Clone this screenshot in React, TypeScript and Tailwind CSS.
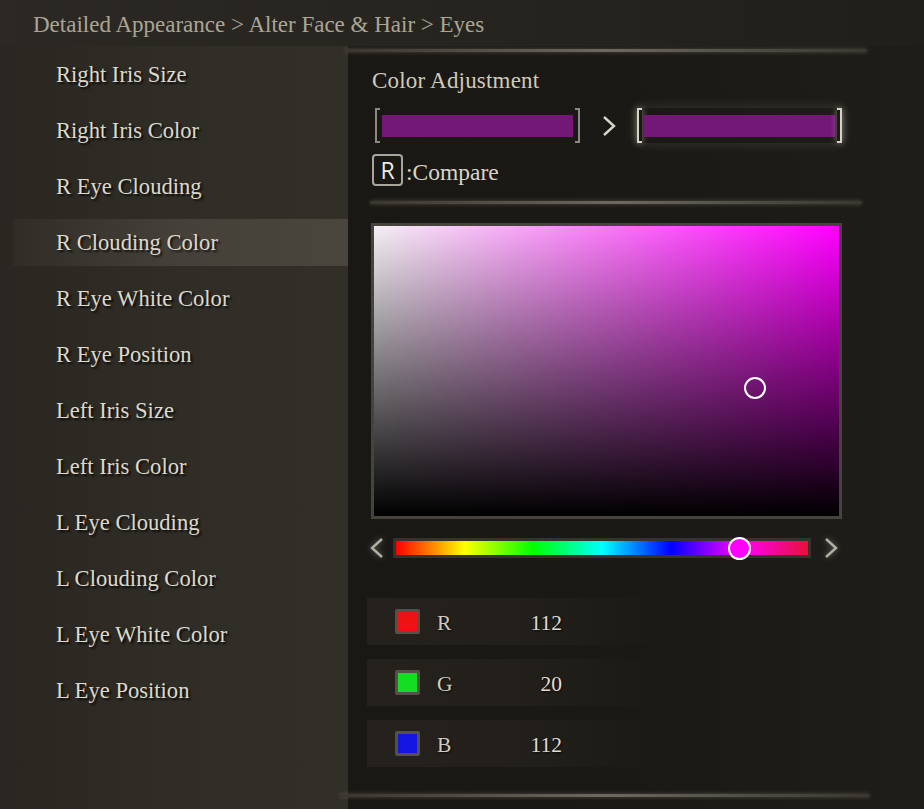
import React from 'react';

const items = [
  'Right Iris Size',
  'Right Iris Color',
  'R Eye Clouding',
  'R Clouding Color',
  'R Eye White Color',
  'R Eye Position',
  'Left Iris Size',
  'Left Iris Color',
  'L Eye Clouding',
  'L Clouding Color',
  'L Eye White Color',
  'L Eye Position',
];

const channels = [
  { label: 'R', value: 112, swatch: 'bg-[#ee1212]' },
  { label: 'G', value: 20, swatch: 'bg-[#14dd24]' },
  { label: 'B', value: 112, swatch: 'bg-[#1616e2]' },
];

const hue = 300;
const picker = { s: 0.82, v: 0.44 };

function Chevron({ dir, className }: { dir: 'left' | 'right'; className?: string }) {
  return (
    <svg width="16" height="22" viewBox="0 0 16 22" className={className}>
      <polyline
        points={dir === 'right' ? '3,2 13,11 3,20' : '13,2 3,11 13,20'}
        fill="none"
        stroke="currentColor"
        strokeWidth="2.4"
        strokeLinejoin="miter"
      />
    </svg>
  );
}

function Swatch({ active }: { active?: boolean }) {
  const bracket = active
    ? 'border-[#d6d2c6] shadow-[0_0_6px_rgba(220,215,200,0.55)]'
    : 'border-[#8d897f]';
  return (
    <div className={`flex items-center gap-[2px] ${active ? 'shadow-[0_0_14px_rgba(200,195,180,0.18)]' : ''}`}>
      <div className={`w-[5px] h-[35px] border-l-2 border-t-2 border-b-2 ${bracket}`} />
      <div className="w-[191px] h-[22px] bg-[#741878]" />
      <div className={`w-[5px] h-[35px] border-r-2 border-t-2 border-b-2 ${bracket}`} />
    </div>
  );
}

function GlowLine({ className }: { className: string }) {
  return (
    <div
      className={`h-[3px] rounded-full bg-linear-to-r from-[#3a3731] via-[#6d6960] to-[#3a3731] shadow-[0_0_4px_rgba(120,115,105,0.6)] ${className}`}
    />
  );
}

export default function App() {
  return (
    <div className="w-[924px] h-[809px] overflow-hidden bg-[#2a2722] text-[#dcd8cc] font-['Liberation_Serif','DejaVu_Serif',serif]">
      {/* Breadcrumb */}
      <div className="h-[46px] pl-[33px] pt-[11px] text-[23px] leading-[28px] text-[#aaa595] bg-linear-to-r from-[#2c2924] to-[#211f1b]">
        Detailed Appearance &gt; Alter Face &amp; Hair &gt; Eyes
      </div>

      <div className="flex h-[763px]">
        {/* Left menu */}
        <div className="w-[348px] bg-linear-to-r from-[#2a2722] via-[#302d27] to-[#322f29]">
          {items.map((label, i) => (
            <div key={label} className="h-[56px] flex items-center">
              {i === 3 ? (
                <div className="ml-[13px] flex-1 h-[47px] flex items-center pt-[2px] pl-[43px] text-[22.6px] [text-shadow:2px_2px_2px_rgba(0,0,0,0.75)] bg-linear-to-r from-[#302d27] via-[#45413a] to-[#4a463d]">
                  {label}
                </div>
              ) : (
                <div className="flex-1 h-[47px] flex items-center pt-[2px] pl-[56px] text-[22.6px] [text-shadow:2px_2px_2px_rgba(0,0,0,0.75)]">
                  {label}
                </div>
              )}
            </div>
          ))}
        </div>

        {/* Right panel */}
        <div className="flex-1 flex flex-col bg-linear-to-r from-[#1a1814] via-[#1b1915] to-[#1f1d19]">
          <GlowLine className="mt-[3px] w-[522px] -ml-[3px]" />

          <div className="pl-[24px] flex flex-col">
            <div className="mt-[15px] text-[23px] leading-[28px] tracking-[0.2px] text-[#cfcabb]">Color Adjustment</div>

            <div className="mt-[13px] flex items-center">
              <div className="ml-[3px]">
                <Swatch />
              </div>
              <Chevron dir="right" className="ml-[21px] text-[#d8d4c8]" />
              <div className="ml-[20px]">
                <Swatch active />
              </div>
            </div>

            <div className="mt-[11px] flex items-center h-[32px]">
              <div className="w-[31px] h-[32px] rounded-[4px] border-2 border-[#a9a59b] flex items-center justify-center text-[23px] font-medium text-[#ecebe6] font-['Open_Sans',sans-serif]">
                R
              </div>
              <span className="ml-[3px] pt-[5px] text-[23.5px] text-[#d8d4c8]">:Compare</span>
            </div>

            <GlowLine className="mt-[15px] w-[492px] -ml-[2px] h-[2px]" />

            {/* Saturation / value field */}
            <div className="mt-[19px] -ml-[1px] relative w-[471px] h-[296px] border-[3px] border-[#46433c] bg-[#ff00ff]">
              <div className="absolute inset-0 bg-linear-to-r from-[#f4f0f4] to-transparent" />
              <div className="absolute inset-0 bg-linear-to-b from-transparent to-black" />
              <div
                className="absolute w-[22px] h-[22px] -ml-[11px] -mt-[11px] rounded-full border-2 border-white"
                style={{ left: `${picker.s * 100}%`, top: `${(1 - picker.v) * 100}%` }}
              />
            </div>

            {/* Hue slider */}
            <div className="mt-[18px] h-[22px] flex items-center -ml-[3px]">
              <Chevron dir="left" className="text-[#b3afa4] [filter:drop-shadow(0_0_3px_rgba(200,195,180,0.5))]" />
              <div className="ml-[8px] relative w-[418px] h-[20px] border-[3px] border-[#36332d] bg-[linear-gradient(to_right,#f00,#ff0,#0f0,#0ff,#00f,#f0f,#e8103a)]">
                <div
                  className="absolute top-1/2 w-[23px] h-[23px] -ml-[11px] -mt-[11.5px] rounded-full border-2 border-white bg-[#ff00ff]"
                  style={{ left: `${(hue / 360) * 100}%` }}
                />
              </div>
              <Chevron dir="right" className="ml-[12px] text-[#b3afa4] [filter:drop-shadow(0_0_3px_rgba(200,195,180,0.5))]" />
            </div>

            {/* RGB rows */}
            <div className="mt-[39px] -ml-[5px] flex flex-col gap-[14px]">
              {channels.map((c) => (
                <div
                  key={c.label}
                  className="w-[300px] h-[47px] flex items-center pl-[28px] bg-linear-to-r from-[#25221d] via-[#23201b] to-transparent [text-shadow:1px_1px_2px_rgba(0,0,0,0.8)]"
                >
                  <div className="w-[25px] h-[25px] border-[3px] border-[#555148] rounded-[2px] flex">
                    <div className={`flex-1 ${c.swatch}`} />
                  </div>
                  <span className="ml-[17px] w-[20px] pt-[4px] text-[21.5px] text-[#cfcabd]">{c.label}</span>
                  <span className="w-[105px] pt-[4px] text-right text-[21.5px] text-[#e0dcd2]">{c.value}</span>
                </div>
              ))}
            </div>
          </div>

          <GlowLine className="mt-[27px] w-[530px] -ml-[8px]" />
        </div>
      </div>
    </div>
  );
}
